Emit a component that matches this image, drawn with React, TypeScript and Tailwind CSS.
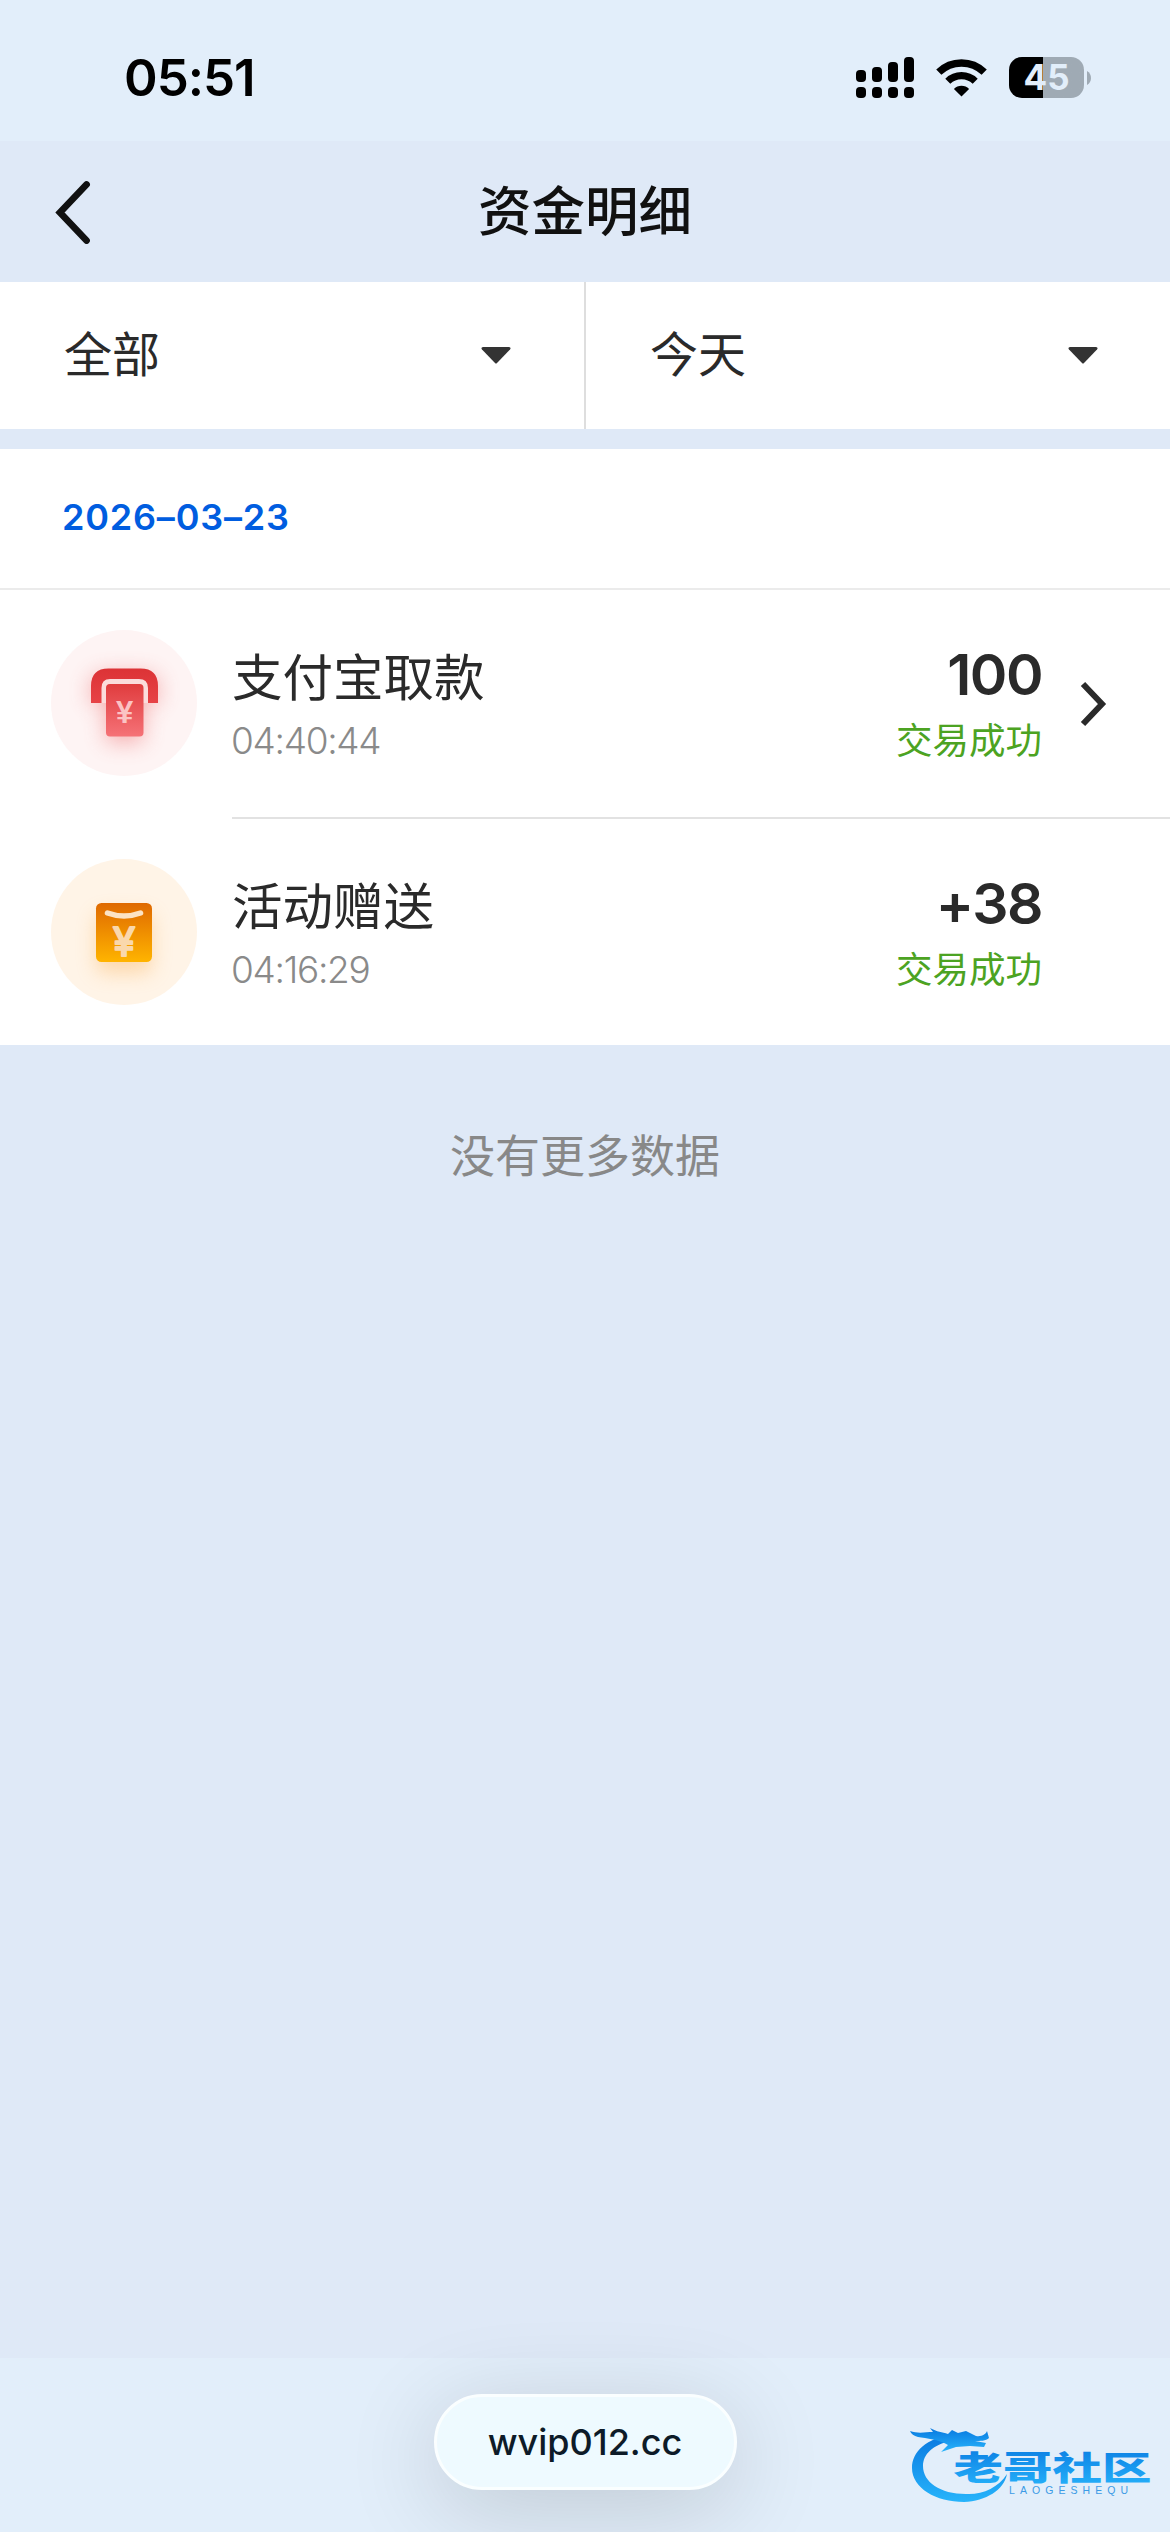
import React from "react";

type IconProps = { className?: string };

const SignalIcon = () => (
  <svg width="58" height="41" viewBox="0 0 58 41" fill="#000">
    <rect x="0" y="13" width="10" height="12" rx="4" />
    <rect x="16" y="10" width="10" height="15" rx="4" />
    <rect x="32" y="5" width="10" height="20" rx="4" />
    <rect x="48" y="0" width="10" height="25" rx="4" />
    <rect x="0" y="30" width="10" height="11" rx="4" />
    <rect x="16" y="30" width="10" height="11" rx="4" />
    <rect x="32" y="30" width="10" height="11" rx="4" />
    <rect x="48" y="30" width="10" height="11" rx="4" />
  </svg>
);

const WifiIcon = ({ className }: IconProps) => (
  <svg className={className} width="51" height="38" viewBox="0 0 51 38">
    <path d="M2.8 13.2A32.5 32.5 0 0 1 48.2 13.2" fill="none" stroke="#000" strokeWidth="7.4" />
    <path d="M11.8 22.2A19.6 19.6 0 0 1 39.2 22.2" fill="none" stroke="#000" strokeWidth="7.2" />
    <path d="M25.5 37.5L17.9 29.9A10.8 10.8 0 0 1 33.1 29.9Z" fill="#000" />
  </svg>
);

const Battery = () => (
  <div className="flex items-center gap-[3px]">
    <div className="flex h-[41px] w-[75px] items-center justify-center rounded-[13px] bg-linear-to-r from-black from-45% to-[#9faab4] to-45%">
      <span className="text-[35px] font-bold leading-none text-[#e2eefa]">45</span>
    </div>
    <svg width="4" height="14" viewBox="0 0 4 14">
      <path d="M0 0C5.3 2.5 5.3 11.5 0 14Z" fill="#9faab4" />
    </svg>
  </div>
);

const WithdrawIcon = () => (
  <svg width="146" height="146" viewBox="0 0 146 146">
    <defs>
      <linearGradient id="card" x1="0" y1="0" x2="0" y2="1">
        <stop offset="0" stopColor="#e03c3e" />
        <stop offset="1" stopColor="#f57277" />
      </linearGradient>
      <linearGradient id="arch" x1="0" y1="0" x2="0" y2="1">
        <stop offset="0" stopColor="#dc3336" />
        <stop offset="1" stopColor="#e74347" />
      </linearGradient>
      <filter id="redGlow" x="-60%" y="-60%" width="220%" height="220%">
        <feGaussianBlur stdDeviation="11" />
      </filter>
    </defs>
    <circle cx="73" cy="73" r="73" fill="#fef4f4" />
    <g filter="url(#redGlow)" opacity="0.42">
      <path d="M40 73V57Q40 45 54 44H93Q107 45 107 57V73H92V112H55V73Z" fill="#e8484c" />
    </g>
    <path d="M50 73V58Q50 49 59 49H88Q97 49 97 58V73H92V60Q92 54 88 54H59Q55 54 55 60V73Z" fill="#fbdcdc" />
    <path
      d="M40 73V56Q40 38.500 57.500 38.500H89.500Q107 38.500 107 56V73H97V58Q97 49 88 49H59Q50.500 49 50.500 58V73Z"
      fill="url(#arch)"
    />
    <rect x="55" y="54" width="37.500" height="52.500" rx="4" fill="url(#card)" />
    <text
      x="73.500"
      y="93"
      textAnchor="middle"
      fontSize="31"
      fontWeight="600"
      fill="#fbc3c4"
      className="font-['Liberation_Sans',sans-serif]"
    >
      ¥
    </text>
  </svg>
);

const GiftIcon = () => (
  <svg width="146" height="146" viewBox="0 0 146 146">
    <defs>
      <linearGradient id="packet" x1="0" y1="0" x2="0" y2="1">
        <stop offset="0" stopColor="#df6900" />
        <stop offset="1" stopColor="#ffb400" />
      </linearGradient>
      <filter id="amberGlow" x="-60%" y="-60%" width="220%" height="220%">
        <feGaussianBlur stdDeviation="10" />
      </filter>
    </defs>
    <circle cx="73" cy="73" r="73" fill="#fff4e7" />
    <rect x="45" y="55" width="56" height="59" rx="8" fill="#f9a640" opacity="0.36" filter="url(#amberGlow)" />
    <rect x="45" y="44" width="56" height="59" rx="5.500" fill="url(#packet)" />
    <path d="M56.500 54Q73 60 89.500 54" fill="none" stroke="#fce3c4" strokeWidth="5.500" strokeLinecap="round" />
    <text
      x="73"
      y="96.500"
      textAnchor="middle"
      fontSize="40"
      fontWeight="400"
      fill="#fad8ac"
      stroke="#fad8ac"
      strokeWidth="2.200"
      strokeLinejoin="round"
      className="font-['Inter']"
    >
      ¥
    </text>
  </svg>
);

const SiteLogo = () => (
  <svg width="250" height="88" viewBox="0 0 250 88">
    <defs>
      <linearGradient id="logoBlue" x1="0" y1="0" x2="0" y2="1">
        <stop offset="0" stopColor="#0878e0" />
        <stop offset="1" stopColor="#27b4fb" />
      </linearGradient>
    </defs>
    <g fill="url(#logoBlue)">
      <path d="M44 14C16 18 2 32 2 48C2 68 26 82 54 82C76 81 94 70 97 54C88 68 72 75 56 74C30 74 13 62 13 46C13 34 23 25 40 21Z" />
      <path d="M0 11C8 14 16 12 23 12L20 8C27 12 32 12 38 14L42 10L48 13L56 11L66 16C72 17 76 14 77 11L79 18C76 21 70 21 65 21L76 23L74 27L60 26L46 27L31 32L38 25C30 20 16 18 8 17C4 16 1 14 0 11Z" />
    </g>
    <text
      x="0"
      y="0"
      transform="translate(43.500 60) scale(1.5 1)"
      fontSize="33"
      fontWeight="900"
      fill="url(#logoBlue)"
      className="font-['Noto_Sans_CJK_SC',sans-serif]"
    >
      老哥社区
    </text>
    <text
      x="99"
      y="74"
      fontSize="10.500"
      fontWeight="400"
      textLength="119"
      fill="#3c9be6"
      className="font-['Liberation_Sans',sans-serif]"
    >
      LAOGESHEQU
    </text>
  </svg>
);

const filters = ["全部", "今天"];

const records = [
  { title: "支付宝取款", time: "04:40:44", amount: "100", status: "交易成功", icon: <WithdrawIcon />, link: true },
  { title: "活动赠送", time: "04:16:29", amount: "+38", status: "交易成功", icon: <GiftIcon />, link: false },
];

const StatusBar = () => (
  <div className="flex h-[141px] items-start justify-between bg-[#e2eefa] pl-[124px] pr-[79px] pt-[57px]">
    <span className="text-[51px] font-semibold leading-[42px] tracking-[-1px] text-black">05:51</span>
    <div className="flex items-center">
      <SignalIcon />
      <WifiIcon className="ml-[22px] mr-[22px]" />
      <Battery />
    </div>
  </div>
);

const Header = () => (
  <header className="grid h-[141px] grid-cols-3 items-center">
    <svg className="ml-[54px]" width="38" height="64" viewBox="0 0 38 64">
      <path d="M32.500 4.500L6 32.500L32.500 60.500" fill="none" stroke="#111" strokeWidth="6.800" strokeLinecap="round" />
    </svg>
    <h1 className="pt-px text-center text-[53.500px] font-medium leading-none text-[#111]">资金明细</h1>
  </header>
);

const FilterBar = () => (
  <div className="grid h-[147px] grid-cols-[586px_1fr] bg-white">
    {filters.map((label, i) => (
      <button
        key={label}
        className={
          i === 0
            ? "flex items-center justify-between border-r-2 border-[#dedede] pl-16 pr-[73px]"
            : "flex items-center justify-between pl-16 pr-[72px]"
        }
      >
        <span className="pb-[2px] text-[48px] leading-none text-[#2a2a2a]">{label}</span>
        <svg width="30" height="17" viewBox="0 0 30 17">
          <path d="M2 0H28Q30.500 0.500 29 2.500L16 16Q15 17 14 16L1 2.500Q-0.500 0.500 2 0Z" fill="#333" />
        </svg>
      </button>
    ))}
  </div>
);

export default function App() {
  return (
    <div className="flex h-[2532px] w-[1170px] flex-col overflow-hidden bg-[#dfe9f7] font-['Inter','Noto_Sans_CJK_SC',sans-serif]">
      <StatusBar />
      <Header />
      <FilterBar />

      <section className="mt-5 bg-white">
        <div className="flex h-[141px] items-center border-b-2 border-[#ebebeb] pb-[3px] pl-[62px]">
          <span className="text-[36px] font-semibold leading-none tracking-[0.8px] text-[#005de0]">2026–03–23</span>
        </div>
        {records.map((r, i) => (
          <div key={r.title} className={i === 0 ? "flex h-[229px] pl-[51px]" : "flex h-[226px] pl-[51px]"}>
            <div className="pt-10">{r.icon}</div>
            <div
              className={
                i === 0
                  ? "ml-[35px] flex flex-1 border-b-2 border-[#e2e2e2]"
                  : "ml-[35px] flex flex-1"
              }
            >
              <div className="flex flex-1 flex-col pt-[62px]">
                <span className="text-[50.500px] leading-[52px] text-[#2a2a2a]">{r.title}</span>
                <span className="-ml-px mt-[15px] text-[37px] font-[350] leading-[44px] tracking-[-1.300px] text-[#8a8a8a]">
                  {r.time}
                </span>
              </div>
              <div className="flex flex-col items-end pt-[57px]">
                <span className="text-[57px] font-semibold leading-[56px] tracking-[-1.500px] text-[#2a2a2a]">{r.amount}</span>
                <span className="mt-[16px] text-[36.500px] leading-[44px] text-[#4ca322]">{r.status}</span>
              </div>
              <div className="flex w-[128px] items-center pl-[38px]">
                {r.link && (
                  <svg width="28" height="46" viewBox="0 0 28 46">
                    <path d="M3 3L22 23L3 43" fill="none" stroke="#2a2a2a" strokeWidth="6" />
                  </svg>
                )}
              </div>
            </div>
          </div>
        ))}
      </section>

      <p className="mt-[89px] text-center text-[45px] leading-[46px] text-[#888]">没有更多数据</p>

      {/* bottom address bar */}
      <footer className="relative mt-auto flex h-[174px] items-start justify-center bg-[#e2eefa] pt-9">
        <div className="flex h-24 w-[303px] items-center justify-center rounded-full border-[3px] border-[#fafeff] bg-[#eefaff] shadow-[0_18px_96px_rgba(0,0,0,0.16)]">
          <span className="text-[36px] font-medium leading-none text-[#0d1b28]">wvip012.cc</span>
        </div>
        <div className="absolute left-[910px] top-[62px]">
          <SiteLogo />
        </div>
      </footer>
    </div>
  );
}
